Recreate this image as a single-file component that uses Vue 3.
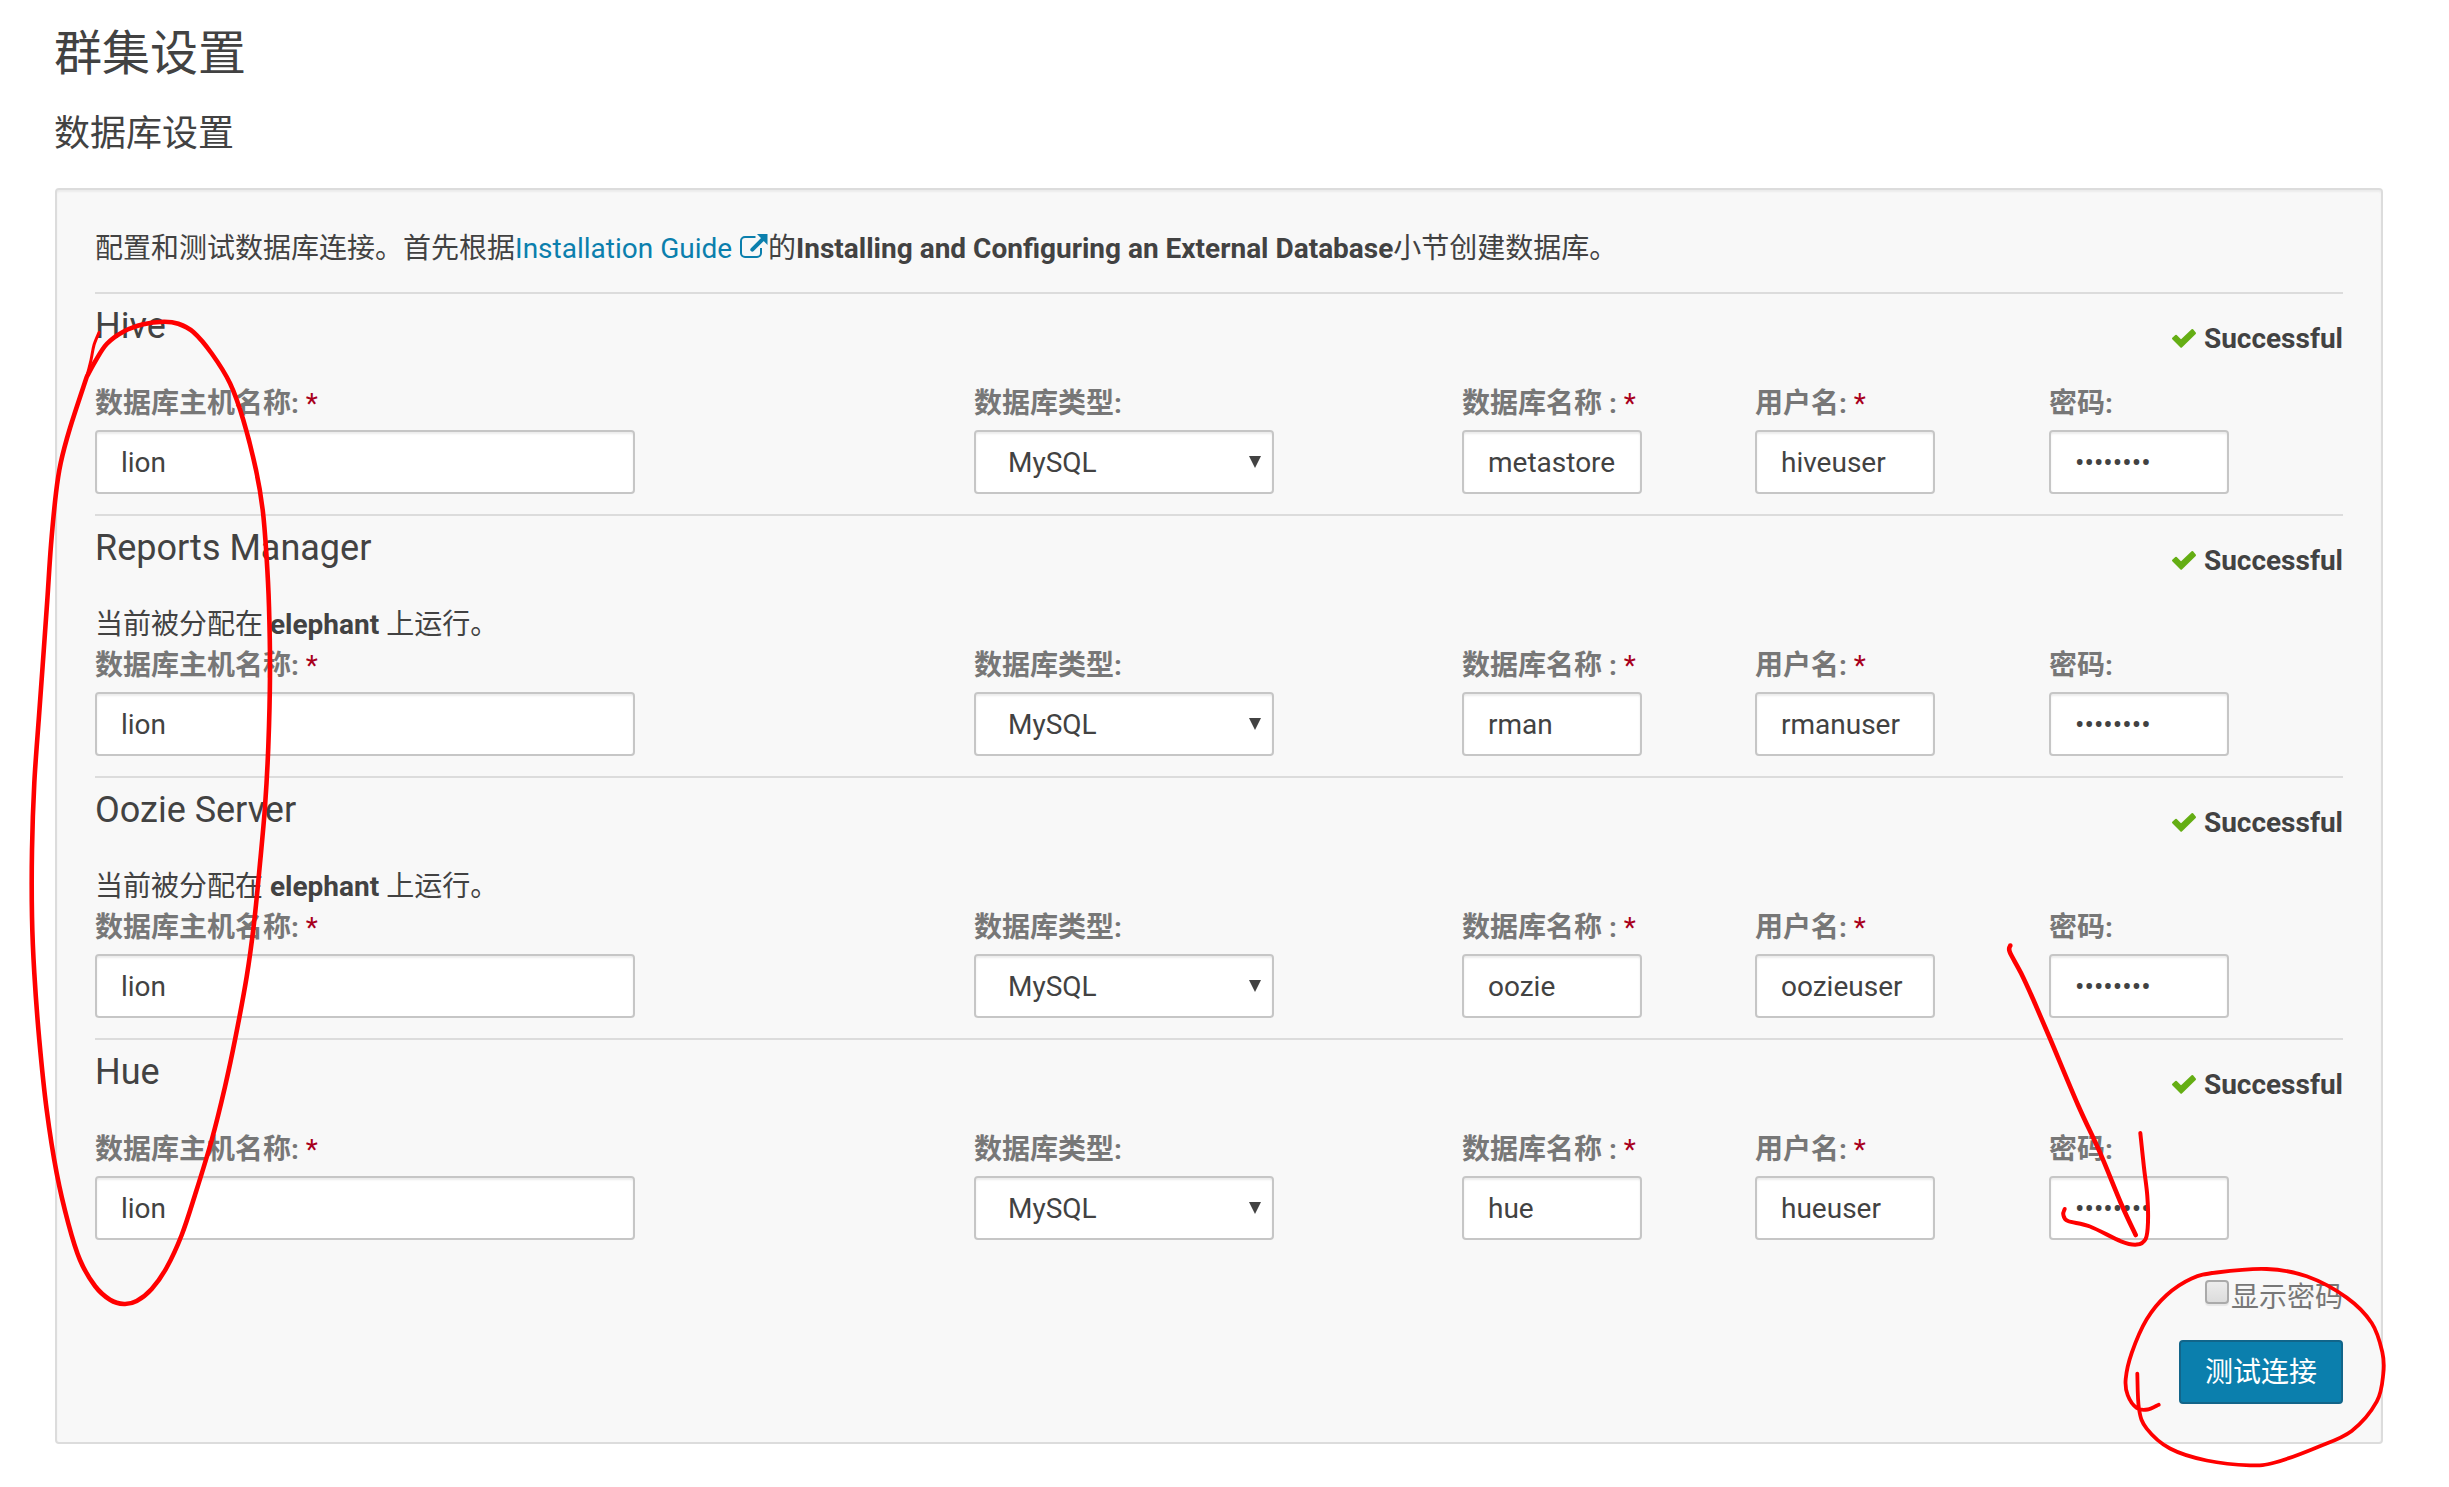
<script setup>
const services = [
  { name: 'Hive', host: 'lion', db: 'metastore', user: 'hiveuser' },
  { name: 'Reports Manager', node: 'elephant', host: 'lion', db: 'rman', user: 'rmanuser' },
  { name: 'Oozie Server', node: 'elephant', host: 'lion', db: 'oozie', user: 'oozieuser' },
  { name: 'Hue', host: 'lion', db: 'hue', user: 'hueuser' },
]

// Pen strokes: width followed by the points the curve runs through.
const strokes = [
  { w: 4.6, pts: [[86.7, 377], [95, 361.7], [106.7, 344], [123.3, 331.7], [143.3, 324.3], [163.3, 321.7], [178.3, 323.7], [193.3, 332], [211.7, 353.5], [230, 383.3], [243.3, 420], [256, 470], [262.7, 510], [266.5, 556], [269, 606.7], [270, 673.3], [268.3, 746.7], [265, 806.7], [260, 863.3], [254, 923.3], [246.7, 976.7], [235.3, 1038.3], [225, 1086.7], [211.7, 1140], [195, 1195], [181.7, 1235], [166.7, 1267.5], [151.7, 1289], [136.7, 1301], [124, 1304], [110, 1299.7], [95, 1286], [80, 1260], [68.3, 1223.3], [56.7, 1173.3], [46.7, 1110], [39.3, 1040], [34.3, 973], [32, 916.7], [32, 850], [34.3, 783], [39, 716], [43.3, 656.7], [47.3, 600], [51, 545], [56, 493], [60.7, 463], [70, 428], [86.7, 377]] },
  { w: 3, pts: [[86.7, 377], [91, 360], [94, 345], [99, 332.5]] },
  { w: 4.6, pts: [[2010.3, 945.5], [2009.8, 952], [2021, 973], [2033, 999], [2050, 1038.5], [2078, 1105], [2100, 1152.7], [2121.7, 1205], [2135.7, 1235]] },
  { w: 4, pts: [[2140.3, 1132.9], [2144, 1167.7], [2147.3, 1195.8], [2148, 1222], [2145.7, 1238.8], [2136.7, 1244.6], [2121, 1241.3], [2090, 1226.5], [2068, 1221], [2063.3, 1214.5], [2064.7, 1209]] },
  { w: 3.8, pts: [[2158.7, 1404.7], [2147.7, 1409.5], [2136.7, 1408], [2127.7, 1395.2], [2125.7, 1379], [2131.7, 1353], [2146.7, 1319.3], [2166.7, 1295], [2191.7, 1278.5], [2216.7, 1272.5], [2266.7, 1269], [2306.7, 1276.3], [2346.7, 1297.6], [2371.7, 1323], [2382.3, 1352], [2383.3, 1373.6], [2376.7, 1401.7], [2351.7, 1430.9], [2316.7, 1447.4], [2275, 1462.5], [2250, 1465.3], [2206.7, 1460.5], [2170, 1448.5], [2146.7, 1428.6], [2139, 1409], [2137.3, 1373.6]] },
]

const smooth = (p) => {
  let d = `M${p[0]}`
  for (let i = 0; i < p.length - 1; i++) {
    const a = p[i - 1] || p[i]
    const b = p[i]
    const c = p[i + 1]
    const e = p[i + 2] || c
    d += ` C${b[0] + (c[0] - a[0]) / 6},${b[1] + (c[1] - a[1]) / 6} ${c[0] - (e[0] - b[0]) / 6},${c[1] - (e[1] - b[1]) / 6} ${c}`
  }
  return d
}
</script>

<template>
  <main class="page">
    <h1>群集设置</h1>
    <h2>数据库设置</h2>

    <section class="well">
      <p class="intro">配置和测试数据库连接。首先根据<a class="link">Installation Guide <svg class="ext" viewBox="0 0 29 24"><path d="M16.5 3H6a4 4 0 0 0-4 4v12a4 4 0 0 0 4 4h12a4 4 0 0 0 4-4v-5" fill="none" stroke="currentColor" stroke-width="2" /><path d="M13.3 15.7L24 5" stroke="currentColor" stroke-width="4" stroke-linecap="round" /><path d="M18 0h10.5v11z" fill="currentColor" /></svg></a>的<b>Installing and Configuring an External Database</b>小节创建数据库。</p>

      <article v-for="s in services" :key="s.name" class="service">
        <header>
          <h3>{{ s.name }}</h3>
          <div class="status">
            <svg class="check" viewBox="0 0 24 19"><path d="M1 9.5L4 6.8L9 11.7L20.3 1L23 4.2L9.2 17.8Z" /></svg>
            <b>Successful</b>
          </div>
        </header>
        <p v-if="s.node" class="note">当前被分配在 <b>{{ s.node }}</b> 上运行。</p>
        <div class="fields">
          <div class="field">
            <label>数据库主机名称: <i>*</i></label>
            <div class="input host">{{ s.host }}</div>
          </div>
          <div class="field">
            <label>数据库类型:</label>
            <div class="input select"><span>MySQL</span><svg viewBox="0 0 12 12"><path d="M0 0h12L6 12z" /></svg></div>
          </div>
          <div class="field">
            <label>数据库名称 : <i>*</i></label>
            <div class="input">{{ s.db }}</div>
          </div>
          <div class="field">
            <label>用户名: <i>*</i></label>
            <div class="input">{{ s.user }}</div>
          </div>
          <div class="field">
            <label>密码:</label>
            <div class="input">••••••••</div>
          </div>
        </div>
      </article>

      <footer>
        <div class="show"><span class="box"></span><span>显示密码</span></div>
        <button type="button">测试连接</button>
      </footer>
    </section>

    <svg class="ink" viewBox="0 0 2449 1487">
      <path v-for="(s, i) in strokes" :key="i" :d="smooth(s.pts)" :stroke-width="s.w" />
    </svg>
  </main>
</template>

<style>
body {
  margin: 0;
  background: #fff;
}
</style>

<style scoped>
* {
  box-sizing: border-box;
}
.page {
  position: relative;
  width: 2449px;
  height: 1487px;
  padding: 24px 66px 0 55px;
  overflow: hidden;
  color: #424242;
  font: 28px/40px Roboto, "Noto Sans CJK SC", sans-serif;
}
h1, h2, h3, p {
  margin: 0;
  font-weight: 400;
}
h1 {
  margin-left: -1px;
  font-size: 48px;
  line-height: 60px;
}
h2 {
  margin: 30px 0 0 -1px;
  font-size: 36px;
  line-height: 40px;
}
.well {
  width: 2328px;
  height: 1256px;
  margin-top: 34px;
  padding: 39px 38px 0;
  background: #f8f8f8;
  border: 2px solid #dcdcdc;
  border-radius: 4px;
  box-shadow: inset 0 2px 2px rgba(0, 0, 0, 0.05);
}
.intro {
  height: 63px;
  white-space: nowrap;
}
.link {
  color: #0b7fad;
}
.ext {
  width: 29px;
  height: 24px;
}
b {
  font-weight: 700;
}
.service {
  border-top: 2px solid #dcdcdc;
  padding-bottom: 20px;
}
header {
  display: flex;
  justify-content: space-between;
  height: 89px;
}
h3 {
  padding-top: 12px;
  font-size: 36px;
  line-height: 40px;
}
.status {
  display: flex;
  align-items: flex-start;
  gap: 8px;
  padding-top: 25px;
}
.check {
  width: 24px;
  height: 19px;
  margin-top: 10px;
  fill: #65ae14;
  stroke: #65ae14;
  stroke-width: 2px;
  stroke-linejoin: round;
  overflow: visible;
}
.note {
  height: 40px;
}
.fields {
  display: grid;
  grid-template-columns: 879px 488px 293px 294px 1fr;
}
label {
  display: block;
  height: 47px;
  padding-top: 1px;
  color: #777;
  font-weight: 700;
  white-space: nowrap;
}
label i {
  color: #a8001c;
  font-style: normal;
  font-weight: 400;
}
.input {
  width: 180px;
  height: 64px;
  padding: 11px 24px 9px;
  background: #fff;
  border: 2px solid #c6c6c6;
  border-radius: 4px;
  box-shadow: inset 0 2px 2px rgba(0, 0, 0, 0.075);
  white-space: nowrap;
}
.host {
  width: 540px;
}
.select {
  display: flex;
  justify-content: space-between;
  width: 300px;
  padding: 11px 11px 9px 32px;
}
.select svg {
  width: 12px;
  height: 12px;
  margin-top: 13px;
  fill: #424242;
}
footer {
  display: flex;
  flex-direction: column;
  align-items: flex-end;
  padding-top: 18px;
}
.show {
  display: flex;
  gap: 2px;
  height: 62px;
  color: #777;
}
.box {
  width: 24px;
  height: 24px;
  margin-top: 2px;
  border: 2px solid #aaa;
  border-radius: 4px;
  background: linear-gradient(#ececec, #dcdcdc);
  box-shadow: 0 2px 1px rgba(0, 0, 0, 0.07);
}
button {
  width: 164px;
  height: 64px;
  padding: 2px 0 0;
  color: #fff;
  background: #0b7fad;
  border: 2px solid #12658a;
  border-radius: 4px;
  font: inherit;
}
.ink {
  position: absolute;
  inset: 0;
  width: 2449px;
  height: 1487px;
  fill: none;
  stroke: #f00;
  stroke-linecap: round;
  stroke-linejoin: round;
  pointer-events: none;
}
</style>
